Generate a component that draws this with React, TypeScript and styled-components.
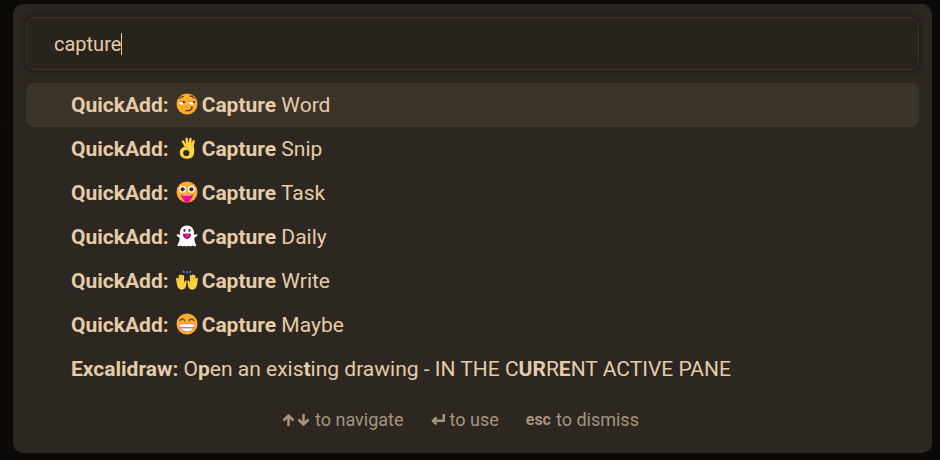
import React, { useState } from "react";
import styled, { createGlobalStyle } from "styled-components";

const GlobalStyle = createGlobalStyle`
  * { box-sizing: border-box; }
  body {
    margin: 0;
    background: #0b0a08;
    color: #e6cba8;
    font-family: Roboto, "Liberation Sans", sans-serif;
  }
`;

const Backdrop = styled.main`
  position: relative;
  padding: 4px 8px 7px 13px;
`;

const Scratch = styled.svg`
  position: absolute;
  left: 0;
  top: 122px;
  width: 7px;
  height: 8px;
`;

const Palette = styled.section`
  padding: 13px;
  border-radius: 10px;
  background: #2c2721;
`;

const SearchBox = styled.label`
  position: relative;
  display: block;
`;

const SearchInput = styled.input`
  display: block;
  width: 100%;
  height: 53px;
  padding: 0 27px;
  border: 1px solid #3a3127;
  border-radius: 8px;
  outline: none;
  background: #28231d;
  box-shadow: 0 0 4px 2px #201b18;
  color: inherit;
  caret-color: transparent;
  font-family: inherit;
  font-size: 20px;
`;

const Caret = styled.span`
  position: absolute;
  left: 95px;
  top: 16px;
  width: 1px;
  height: 22px;
  background: #e6cba8;
`;

const Results = styled.ul`
  display: flex;
  flex-direction: column;
  margin: 13px 0 0;
  padding: 0;
  list-style: none;
`;

const Result = styled.button<{ $selected: boolean }>`
  display: flex;
  align-items: center;
  width: 100%;
  height: 44px;
  padding: 0 45px;
  border: 0;
  border-radius: 8px;
  background: ${(p) => (p.$selected ? "#3c3329" : "transparent")};
  color: inherit;
  font-family: inherit;
  font-size: 21px;
  line-height: 28px;
  text-align: left;
  cursor: pointer;
`;

const Title = styled.span`
  white-space: pre;
`;

const Emoji = styled.svg`
  flex: none;
  width: 22px;
  height: 22px;
  margin: 0 4px 2px 7px;
`;

const Hints = styled.footer`
  display: flex;
  justify-content: center;
  gap: 27px;
  margin-top: 18px;
  padding: 0 24px 9px 0;
  color: #a8947c;
  font-size: 18px;
  line-height: 22px;
`;

const Hint = styled.span`
  display: flex;
  align-items: center;
  gap: 5px;
`;

const Key = styled.kbd`
  font-family: inherit;
  font-size: 16px;
  font-weight: 700;
`;

const KeyIcon = styled.svg<{ $width: number }>`
  width: ${(p) => p.$width}px;
  height: 14px;
  fill: none;
  stroke: currentColor;
  stroke-width: 2.5;
`;

const Smirk = () => (
  <Emoji viewBox="0 0 22 22" aria-hidden="true">
    <circle cx="11" cy="11" r="10.5" fill="#ffab2e" />
    <path d="M2.800 8.600h6.600c0 2-1.300 3.200-3.300 3.200S2.800 10.600 2.800 8.600Zm9.800 0h7c0 2-1.400 3.200-3.500 3.200s-3.500-1.200-3.500-3.200Z" fill="#fff" />
    <path d="M2.600 8.400h6.900M12.500 8.400h7.100" stroke="#9a6224" strokeWidth=".6" />
    <path d="M6.400 8.600h2.700v.9c-.5 1.500-2.700 1.200-2.700-.9Zm10.400 0h2.500v.9c-.5 1.500-2.500 1.200-2.500-.9Z" fill="#3e2a25" />
    <path d="M3.300 5.500c1-1.400 2.400-2.100 4-2M13.800 3.200c1.700-.4 3.400.5 4.200 2M9.800 17.600c3 .5 5.600-.6 6.200-3.100" fill="none" stroke="#57351d" strokeWidth="1.100" strokeLinecap="round" />
    <path d="m15.300 13.900 1.500 1" stroke="#57351d" strokeWidth="1" strokeLinecap="round" />
  </Emoji>
);

const OkHand = () => (
  <Emoji viewBox="0 0 22 22" aria-hidden="true">
    <path
      fillRule="evenodd"
      d="M3.800 15.800c0-3.300 2.100-5.600 4.900-6L6 5.200C5.100 3.700 7.100 2.500 8 3.900l2 3.100-.6-4.800C9.200.5 11.600.2 11.900 1.900l.7 4.300.7-4.300c.3-1.600 2.500-1.300 2.400.3l-.2 4 1-2.300c.6-1.400 2.600-.8 2.300.7L17.700 9c.7 3.300.9 7-.4 9.700-1.100 2.300-3.700 3.200-6.800 3-3.900-.2-6.700-2.400-6.700-5.900Zm3.400.2a3.100 3.100 0 1 0 6.200 0 3.100 3.100 0 1 0-6.200 0Z"
      fill="#ffd53f"
    />
    <path d="m9.200 10.100 3 1.200" stroke="#e8a72d" strokeWidth=".8" />
    <path d="m12.600 6.200.4 2m2.500-2-.3 2" stroke="#edae2d" strokeWidth=".6" />
  </Emoji>
);

const Tongue = () => (
  <Emoji viewBox="0 0 22 22" aria-hidden="true">
    <circle cx="11" cy="11" r="10.5" fill="#ffab2e" />
    <circle cx="6.600" cy="8.200" r="3.500" fill="#fff" />
    <circle cx="15.400" cy="8.200" r="3.500" fill="#fff" />
    <circle cx="6.600" cy="8.300" r="2.100" fill="#3e2b2d" />
    <circle cx="15.400" cy="8.300" r="2.100" fill="#3e2b2d" />
    <path d="M5.200 13.600h11.600c-.3 3.600-2.600 5.800-5.800 5.800s-5.500-2.200-5.800-5.800Z" fill="#b21b4c" />
    <path d="M6.400 13.600h9.200v1H6.400Z" fill="#fff" />
    <path d="M7 14.800h8V17c0 2.600-1.700 4.300-4 4.300S7 19.600 7 17Z" fill="#f70a8d" />
    <path d="M11 15v2.500" stroke="#c8086f" strokeWidth=".7" />
  </Emoji>
);

const Ghost = () => (
  <Emoji viewBox="0 0 22 22" aria-hidden="true">
    <path d="M3.900 8.200C3.900 3.600 6.800.6 11 .6s7.100 3 7.100 7.600v1.700l1.900-.6c1.400-.4 1.900 1 .9 1.800l-2.600 2c.1 2.300.6 4.500 1.600 6.400.7 1.300-.4 2.300-1.700 1.800l-1.800-.7-1.900 1-2.100-.9-1.800.9-2-.9-2.100.8-2.100-.9-1.400.6c-1.300.4-1.900-.7-1.200-1.900 1.200-1.900 1.800-3.900 1.900-6.200l-2.600-2c-1-.8-.4-2.200.9-1.800l1.900.6Z" fill="#fff" />
    <ellipse cx="8.500" cy="5.500" rx="1.100" ry="1.400" fill="#40364a" />
    <ellipse cx="13.500" cy="5.500" rx="1.100" ry="1.400" fill="#40364a" />
    <path d="M6.900 8.700h8.200c0 3-1.700 5.200-4.100 5.200S6.900 11.700 6.900 8.700Z" fill="#70284f" />
    <path d="M8.700 8.700h4.800v2.400c0 2.800-4.800 2.800-4.800 0Z" fill="#f70a8d" />
  </Emoji>
);

const RaisedHands = () => (
  <Emoji viewBox="0 0 22 22" aria-hidden="true">
    <g id="raised-palm">
      <path d="M1.700 9.300C.900 8.100-.2 9 .1 10.200l1 6.100c.5 3 2.600 4.600 5.100 4.300 2.100-.2 3.300-1.400 3.700-3.400l.8-4.500c.2-1.300-1.400-1.700-1.900-.5l-.8 1.700.1-6.900c0-1.300-1.600-1.400-1.800-.2C5.900 5 4.300 5.100 4.300 6.500c-.6-.9-1.800-.4-1.700.7l.2 2.300Z" fill="#ffd23e" />
      <path d="m6.300 6.700-.1 4.700M4.300 6.700l.2 4.700M2.700 9.200l.5 3M7.800 13.900l-1.200 2" fill="none" stroke="#e6a62b" strokeWidth=".5" />
    </g>
    <use href="#raised-palm" transform="matrix(-1 0 0 1 22 0)" />
    <path d="M11 2.300v1.600M7.400 2.300l.7 1.100M14.600 2.300l-.7 1.100" stroke="#3e99df" strokeWidth="1.300" strokeLinecap="round" />
  </Emoji>
);

const Beaming = () => (
  <Emoji viewBox="0 0 22 22" aria-hidden="true">
    <circle cx="11" cy="11" r="10.500" fill="#ffab2e" />
    <path d="M4.200 7.700c.5-2.400 3.800-2.600 4.400 0M13.400 7.700c.6-2.600 3.900-2.400 4.400 0" fill="none" stroke="#57351d" strokeWidth="1.300" strokeLinecap="round" />
    <path id="grin" d="M4.500 11h13c1 0 1.500.7 1.300 1.600-.7 3.700-3.900 6-7.800 6s-7.100-2.300-7.800-6c-.2-.9.3-1.600 1.300-1.600Z" fill="#fff" stroke="#c9653a" strokeWidth=".5" />
    <path d="M3.900 14.800h14.200" stroke="#b52e72" strokeWidth=".9" />
  </Emoji>
);

const captures = [
  { name: "Word", Icon: Smirk },
  { name: "Snip", Icon: OkHand },
  { name: "Task", Icon: Tongue },
  { name: "Daily", Icon: Ghost },
  { name: "Write", Icon: RaisedHands },
  { name: "Maybe", Icon: Beaming },
];

export default function App() {
  const [query, setQuery] = useState("capture");
  const [selected, setSelected] = useState(0);

  return (
    <>
      <GlobalStyle />
      <Backdrop>
        <Scratch viewBox="0 0 7 8" aria-hidden="true">
          <path d="M0 7 6.500 1" stroke="#1d1b19" strokeWidth="1" />
        </Scratch>
        <Palette aria-label="Command palette">
          <SearchBox>
            <SearchInput
              aria-label="Command"
              spellCheck={false}
              value={query}
              onChange={(e) => setQuery(e.target.value)}
            />
            <Caret />
          </SearchBox>
          <Results>
            {captures.map(({ name, Icon }, i) => (
              <li key={name}>
                <Result type="button" $selected={selected === i} onClick={() => setSelected(i)}>
                  <b>QuickAdd:</b>
                  <Icon />
                  <Title>
                    <b>Capture</b> {name}
                  </Title>
                </Result>
              </li>
            ))}
            <li>
              <Result type="button" $selected={selected === 6} onClick={() => setSelected(6)}>
                <Title>
                  <b>Excalidraw:</b> O<b>p</b>en an exis<b>t</b>ing drawing - IN THE C<b>UR</b>R<b>E</b>NT ACTIVE PANE
                </Title>
              </Result>
            </li>
          </Results>
          <Hints>
            <Hint>
              <KeyIcon $width={28} viewBox="0 0 28 14" role="img" aria-label="Up and down arrows">
                <path d="M6.500 13V2.500M1.500 7.500l5-5 5 5M21.500 1v10.500M16.500 6.500l5 5 5-5" />
              </KeyIcon>
              to navigate
            </Hint>
            <Hint>
              <KeyIcon $width={14} viewBox="0 0 14 14" role="img" aria-label="Enter">
                <path d="M12.800 1v6.800H2M5.500 4.300 2 7.800l3.500 3.500" />
              </KeyIcon>
              to use
            </Hint>
            <Hint>
              <Key>esc</Key>
              to dismiss
            </Hint>
          </Hints>
        </Palette>
      </Backdrop>
    </>
  );
}
